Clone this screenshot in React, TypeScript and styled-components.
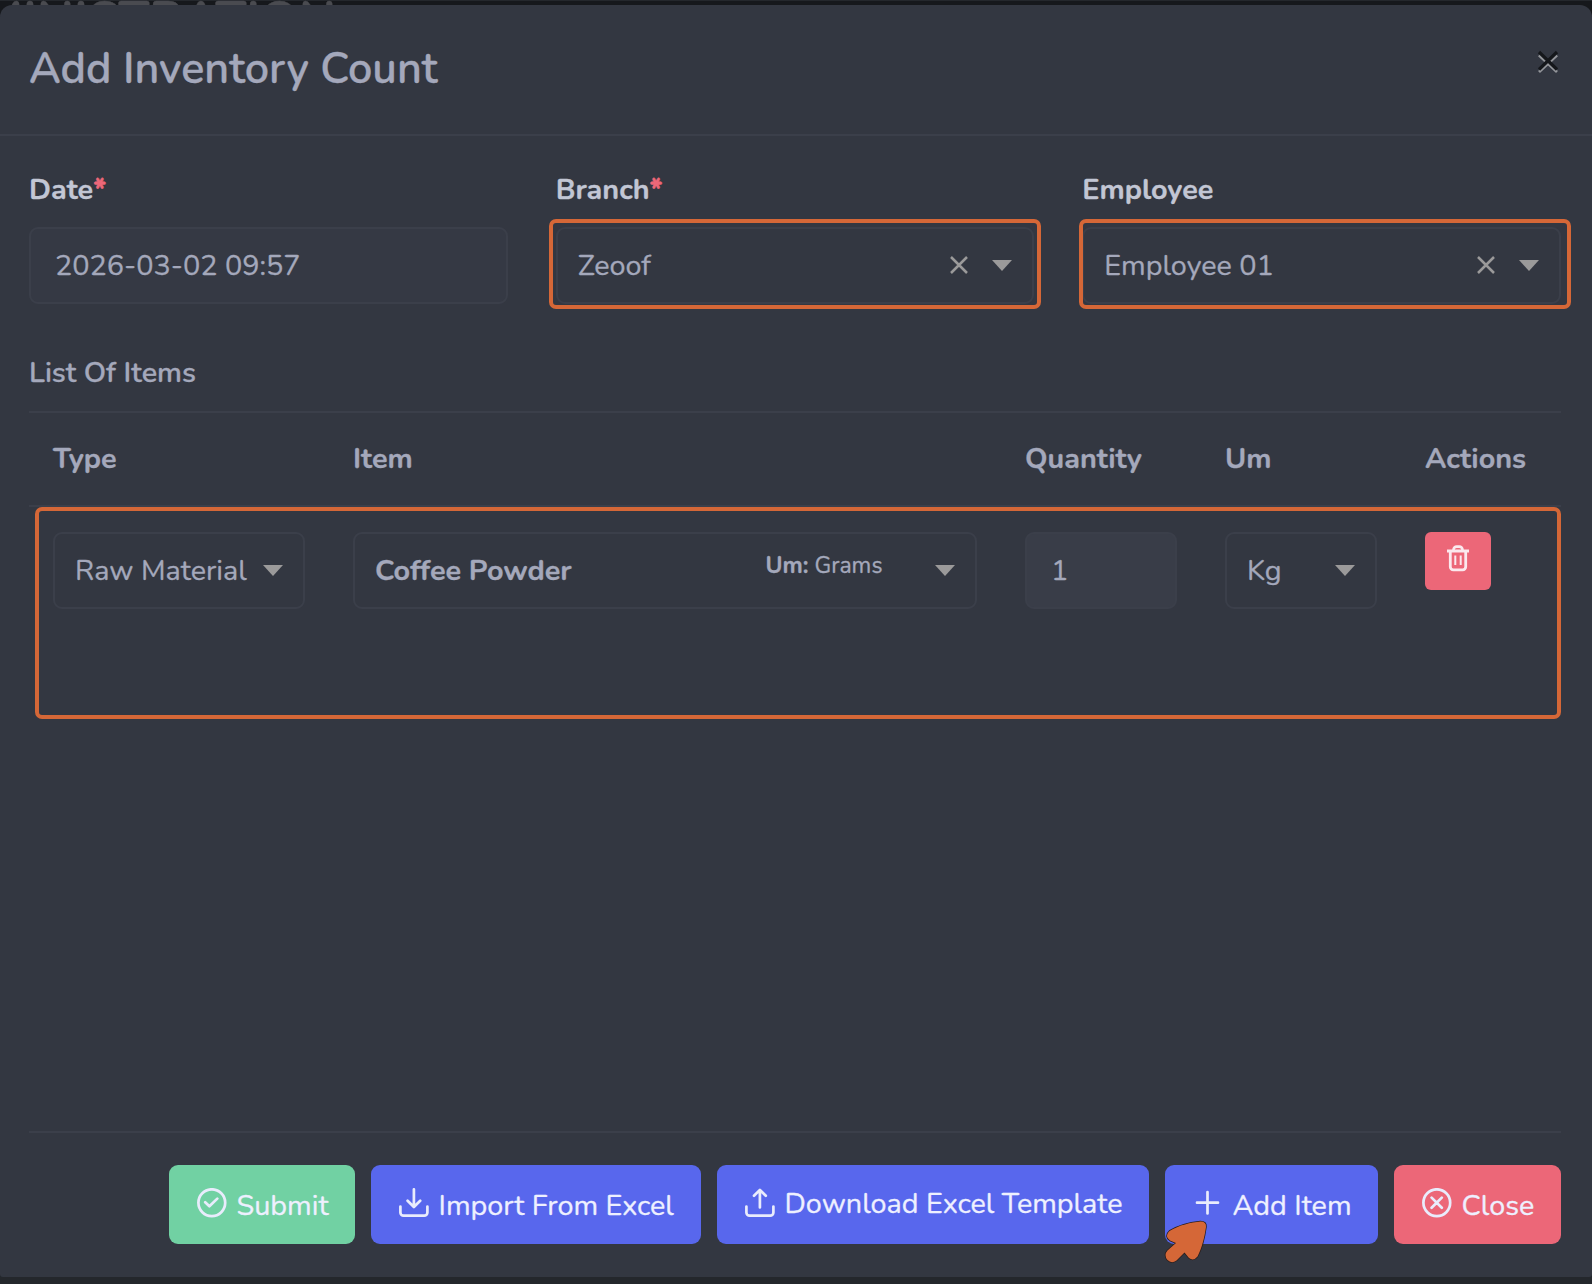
import React from "react";
import styled, { createGlobalStyle } from "styled-components";

const color = {
  modal: "#333741",
  line: "#3b3f4a",
  text: "#a4a8bb",
  label: "#c2c6d4",
  mark: "#d56737",
  danger: "#ec6778",
  success: "#71d1a3",
  primary: "#5867ed",
  glyph: "#9b9a9a",
};

const GlobalStyle = createGlobalStyle`
  *, *::before, *::after { box-sizing: border-box; }
  body {
    margin: 0;
    background: #24272c;
    color: ${color.text};
    font: 400 28.77px/34px Nunito, Lato, "Open Sans", sans-serif;
    -webkit-text-stroke: 0.3px;
    overflow: hidden;
  }
`;

const Page = styled.div`
  position: relative;
  display: flex;
  flex-direction: column;
  height: 1284px;
  padding: 5px 0 7px;
`;

const Behind = styled.div`
  position: absolute;
  top: 0;
  left: 0;
  right: 0;
  height: 17px;
  overflow: hidden;
  display: flex;
  background: linear-gradient(#24272c 1px, #16181c 1px);
`;

const BehindTitle = styled.span`
  width: 336px;
  flex: none;
  display: flex;
  justify-content: flex-end;
  margin-top: -6px;
  color: #4a4b50;
  font-size: 49.5px;
  font-weight: 700;
  line-height: 52px;
  white-space: nowrap;
`;

const Modal = styled.section`
  position: relative;
  flex: 1;
  display: flex;
  flex-direction: column;
  background: ${color.modal};
  border-radius: 12px 12px 3px 3px;
`;

const Header = styled.header`
  display: flex;
  justify-content: space-between;
  align-items: flex-start;
  height: 131px;
  padding: 37px 33px 0 29px;
  border-bottom: 2px solid ${color.line};
`;

const Title = styled.h1`
  margin: 0;
  font-size: 43.15px;
  font-weight: 600;
  line-height: 53px;
`;

const Dismiss = styled.button`
  display: flex;
  margin-top: 8px;
  padding: 0;
  border: 0;
  background: none;
`;

const Body = styled.div`
  flex: 1;
  display: flex;
  flex-direction: column;
  padding: 37px 31px 33px 29px;
`;

const Fields = styled.div`
  display: grid;
  grid-template-columns: repeat(3, 1fr);
  gap: 48px;
`;

const Field = styled.div`
  position: relative;
  display: flex;
  flex-direction: column;
  gap: 20px;
`;

const Label = styled.label`
  height: 34px;
  color: ${color.label};
  font-weight: 700;
`;

const Required = styled.span`
  color: ${color.danger};
  font-weight: 800;
`;

const Box = styled.div<{ $bg?: string; $input?: boolean }>`
  display: flex;
  align-items: flex-start;
  width: 100%;
  height: 77px;
  padding: 19.6px 20px 0 ${(p) => (p.$input ? 24 : 20)}px;
  border: 2px solid ${color.line};
  border-radius: 9px;
  background: ${(p) => p.$bg ?? "transparent"};
`;

const Value = styled.span<{ $bold?: boolean }>`
  font-weight: ${(p) => (p.$bold ? 700 : 400)};
  white-space: nowrap;
`;

const Controls = styled.span`
  display: flex;
  align-items: center;
  gap: 24px;
  height: 34px;
  margin: -0.6px 0 0 auto;
`;

const Unit = styled.span`
  margin: -2px 52.5px 0 auto;
  font-size: 23.1px;
  line-height: 28px;
  white-space: nowrap;

  & + ${Controls} {
    margin-left: 0;
  }
`;

const Mark = styled.span<{ $inset: string }>`
  position: absolute;
  inset: ${(p) => p.$inset};
  border: 4px solid ${color.mark};
  border-radius: 7px;
  pointer-events: none;
`;

const ListTitle = styled.h2`
  margin: 52px 0 21px;
  font-size: inherit;
  line-height: 34px;
  font-weight: 600;
`;

const Table = styled.div`
  border-top: 2px solid ${color.line};
`;

const Columns = styled.div`
  display: grid;
  grid-template-columns: 252px 624px 152px 152px 1fr;
  column-gap: 48px;
  padding-left: 24px;
`;

const HeadRow = styled(Columns)`
  height: 94px;
  padding-top: 28.7px;
  border-bottom: 2px solid ${color.line};
`;

const ItemRow = styled(Columns)`
  position: relative;
  height: 212px;
  padding-top: 25px;
`;

const Heading = styled.span`
  font-weight: 700;
`;

const DeleteButton = styled.button`
  display: flex;
  justify-content: center;
  width: 66px;
  height: 58px;
  padding: 12.5px 0 0;
  border: 0;
  border-radius: 6px;
  background: ${color.danger};
`;

const Footer = styled.footer`
  position: relative;
  display: flex;
  justify-content: flex-end;
  gap: 16px;
  margin-top: auto;
  padding-top: 32px;
  border-top: 2px solid ${color.line};
`;

const Button = styled.button<{ $bg: string; $width: number; $raised?: boolean }>`
  display: flex;
  align-items: flex-start;
  gap: 9.5px;
  width: ${(p) => p.$width}px;
  height: 79px;
  padding: 23px 0 0 28px;
  border: 0;
  border-radius: 9px;
  background: ${(p) => p.$bg};
  color: #eef0ff;
  font: inherit;
  white-space: nowrap;

  span {
    margin-top: ${(p) => (p.$raised ? -1.5 : 0.5)}px;
  }
`;

const Pointer = styled.svg`
  position: absolute;
  left: 1121px;
  top: 67px;
  width: 80px;
  height: 80px;
  pointer-events: none;
`;

const Caret = () => (
  <svg width="20" height="11" viewBox="0 0 20 11">
    <path d="M0 0H20L10 11Z" fill={color.glyph} />
  </svg>
);

const Clear = () => (
  <svg width="18" height="18" viewBox="0 0 18 18" stroke={color.glyph} strokeWidth="2.5">
    <path d="M1 1L17 17M17 1L1 17" />
  </svg>
);

const CloseGlyph = () => (
  <svg width="22" height="24" viewBox="0 0 22 24" fill="none">
    <path d="M2 5.200L20 22M20 5.200L2 22" stroke="#94969b" strokeWidth="2.800" />
    <path d="M2 2L20 19.500M20 2L2 19.500" stroke="#15171b" strokeWidth="3.200" />
  </svg>
);

const Trash = () => (
  <svg width="22" height="27" viewBox="0 0 22 27" fill="none" stroke="#fbe9ee">
    <path d="M0 6H22" strokeWidth="3" />
    <path d="M6.500 6V4.800A3.200 3.200 0 0 1 9.700 1.600H12.300A3.200 3.200 0 0 1 15.500 4.800V6" strokeWidth="2.600" />
    <path d="M3.300 6V21.800A3 3 0 0 0 6.300 24.800H15.700A3 3 0 0 0 18.700 21.800V6" strokeWidth="2.800" />
    <path d="M8.300 10.500V20M13.700 10.500V20" strokeWidth="2" />
  </svg>
);

const paths = {
  check: "M28.200 14.700A13.400 13.400 0 1 1 1.400 14.700A13.400 13.400 0 1 1 28.200 14.700M8.200 14.200L12.400 18.300L20.300 10.600",
  cross: "M28.200 14.700A13.400 13.400 0 1 1 1.400 14.700A13.400 13.400 0 1 1 28.200 14.700M9.600 9.600L19.800 19.800M19.800 9.600L9.600 19.800",
  import: "M14.900 1.300V18.600M8.600 12.800L14.900 19L21.200 12.800M1.400 18.500V24.500A3.200 3.200 0 0 0 4.600 27.700H25.200A3.200 3.200 0 0 0 28.400 24.500V18.500",
  export: "M14.900 2V19.500M9 7.800L14.900 1.900L20.800 7.800M1.400 18.500V24.500A3.200 3.200 0 0 0 4.600 27.700H25.200A3.200 3.200 0 0 0 28.400 24.500V18.500",
  plus: "M4 14.700H25M14.500 4V25.500",
};

const Icon = ({ name }: { name: keyof typeof paths }) => (
  <svg width="30" height="30" viewBox="0 0 30 30" fill="none" stroke="#e9ecfc" strokeWidth="2.700" strokeLinecap="round" strokeLinejoin="round">
    <path d={paths[name]} />
  </svg>
);

function Select({ children, clearable }: { children: React.ReactNode; clearable?: boolean }) {
  return (
    <Box>
      {children}
      <Controls>
        {clearable && <Clear />}
        <Caret />
      </Controls>
    </Box>
  );
}

const headings = ["Type", "Item", "Quantity", "Um", "Actions"];

export default function App() {
  return (
    <>
      <GlobalStyle />
      <Page>
        <Behind>
          <BehindTitle>ADMINISTRATION</BehindTitle>
        </Behind>
        <Modal>
          <Header>
            <Title>Add Inventory Count</Title>
            <Dismiss aria-label="Close">
              <CloseGlyph />
            </Dismiss>
          </Header>
          <Body>
            <Fields>
              <Field>
                <Label>
                  Date<Required>*</Required>
                </Label>
                <Box $bg="#353944" $input>
                  <Value>2026-03-02 09:57</Value>
                </Box>
              </Field>
              <Field>
                <Label>
                  Branch<Required>*</Required>
                </Label>
                <Select clearable>
                  <Value>Zeoof</Value>
                </Select>
                <Mark $inset="46px -7px -5px -7px" />
              </Field>
              <Field>
                <Label>Employee</Label>
                <Select clearable>
                  <Value>Employee 01</Value>
                </Select>
                <Mark $inset="46px -10px -5px -3px" />
              </Field>
            </Fields>

            <ListTitle>List Of Items</ListTitle>
            <Table>
              <HeadRow>
                {headings.map((name) => (
                  <Heading key={name}>{name}</Heading>
                ))}
              </HeadRow>
              <ItemRow>
                <Select>
                  <Value>Raw Material</Value>
                </Select>
                <Select>
                  <Value $bold>Coffee Powder</Value>
                  <Unit>
                    <b>Um:</b> Grams
                  </Unit>
                </Select>
                <Box $bg="#393d48" $input>
                  <Value>1</Value>
                </Box>
                <Select>
                  <Value>Kg</Value>
                </Select>
                <DeleteButton aria-label="Delete">
                  <Trash />
                </DeleteButton>
                <Mark $inset="0 0 0 6px" />
              </ItemRow>
            </Table>

            <Footer>
              <Button $bg={color.success} $width={186}>
                <Icon name="check" />
                <span>Submit</span>
              </Button>
              <Button $bg={color.primary} $width={330}>
                <Icon name="import" />
                <span>Import From Excel</span>
              </Button>
              <Button $bg={color.primary} $width={432} $raised>
                <Icon name="export" />
                <span>Download Excel Template</span>
              </Button>
              <Button $bg={color.primary} $width={213}>
                <Icon name="plus" />
                <span>Add Item</span>
              </Button>
              <Button $bg={color.danger} $width={167}>
                <Icon name="cross" />
                <span>Close</span>
              </Button>
              <Pointer viewBox="0 0 80 80">
                <path
                  d="M19.500 31C29 25 41 22.500 50.500 21.500Q56.500 21.500 56 27C54.500 38 51.500 49 47.500 56.500Q43.500 61.500 39 58L34.500 52.500L26.500 60.500Q21.500 64 17.500 60Q13.500 55 17.500 50.500L26 43L20 40.500Q14 36 19.500 31Z"
                  fill={color.mark}
                  stroke="#2a1d1c"
                  strokeWidth="1.500"
                  strokeLinejoin="round"
                  paintOrder="stroke"
                />
              </Pointer>
            </Footer>
          </Body>
        </Modal>
      </Page>
    </>
  );
}
